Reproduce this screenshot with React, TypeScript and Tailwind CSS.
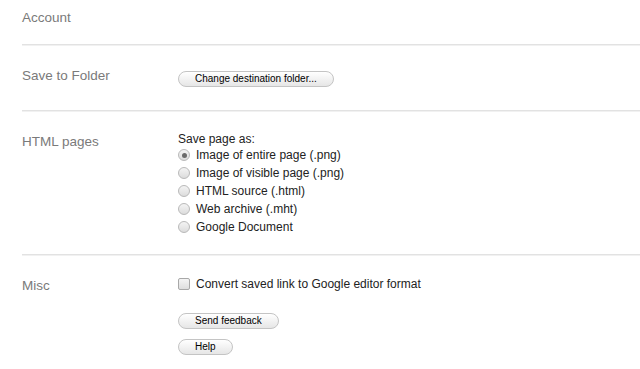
import React from 'react'

const labelClass = 'w-[156px] shrink-0 text-[13.5px] leading-[16px] text-[#7a7a7a]'
const buttonClass =
  'block h-[16px] rounded-full border border-[#c4c4c4] bg-gradient-to-b from-white to-[#e6e6e6] px-[16px] text-[10px] leading-[14px] text-black'

function Divider() {
  return <div className="ml-[22px] h-[2px] border-t border-[#e2e2e2] bg-[#f1f1f1]" />
}

function Radio({ label, checked }: { label: string; checked?: boolean }) {
  return (
    <label className="flex h-[18px] items-center gap-[6px]">
      <span className="flex h-[12px] w-[12px] items-center justify-center rounded-full border border-[#b9b9b9] bg-gradient-to-b from-[#f4f4f4] to-[#dcdcdc]">
        {checked && <span className="h-[5px] w-[5px] rounded-full bg-[#6a6a6a]" />}
      </span>
      <span>{label}</span>
    </label>
  )
}

export default function App() {
  const formats = [
    'Image of entire page (.png)',
    'Image of visible page (.png)',
    'HTML source (.html)',
    'Web archive (.mht)',
    'Google Document',
  ]

  return (
    <div className="min-h-[369px] w-[640px] bg-white font-['Liberation_Sans',Arial,sans-serif]">
      <section className="flex pl-[22px] pt-[10px] pb-[18px]">
        <div className={labelClass}>Account</div>
      </section>
      <Divider />

      <section className="flex pl-[22px] pt-[22px] pb-[23px]">
        <div className={labelClass}>Save to Folder</div>
        <div className="flex pt-[3px]">
          <button className={buttonClass}>Change destination folder...</button>
        </div>
      </section>
      <Divider />

      <section className="flex pl-[22px] pt-[20px] pb-[18px]">
        <div className={`${labelClass} mt-[2px]`}>HTML pages</div>
        <div className="text-[12px] text-[#222]">
          <div className="leading-[14px]">Save page as:</div>
          {formats.map((f, i) => (
            <Radio key={f} label={f} checked={i === 0} />
          ))}
        </div>
      </section>
      <Divider />

      <section className="flex pl-[22px] pt-[19px]">
        <div className={`${labelClass} mt-[3px]`}>Misc</div>
        <div className="text-[12px] text-[#222]">
          <label className="flex h-[18px] items-center gap-[6px]">
            <span className="h-[12px] w-[12px] rounded-[2px] border border-[#a8a8a8] bg-gradient-to-b from-[#f4f4f4] to-[#dedede]" />
            <span>Convert saved link to Google editor format</span>
          </label>
          <div className="mt-[20px] flex flex-col items-start gap-[10px]">
            <button className={buttonClass}>Send feedback</button>
            <button className={buttonClass}>Help</button>
          </div>
        </div>
      </section>
    </div>
  )
}
